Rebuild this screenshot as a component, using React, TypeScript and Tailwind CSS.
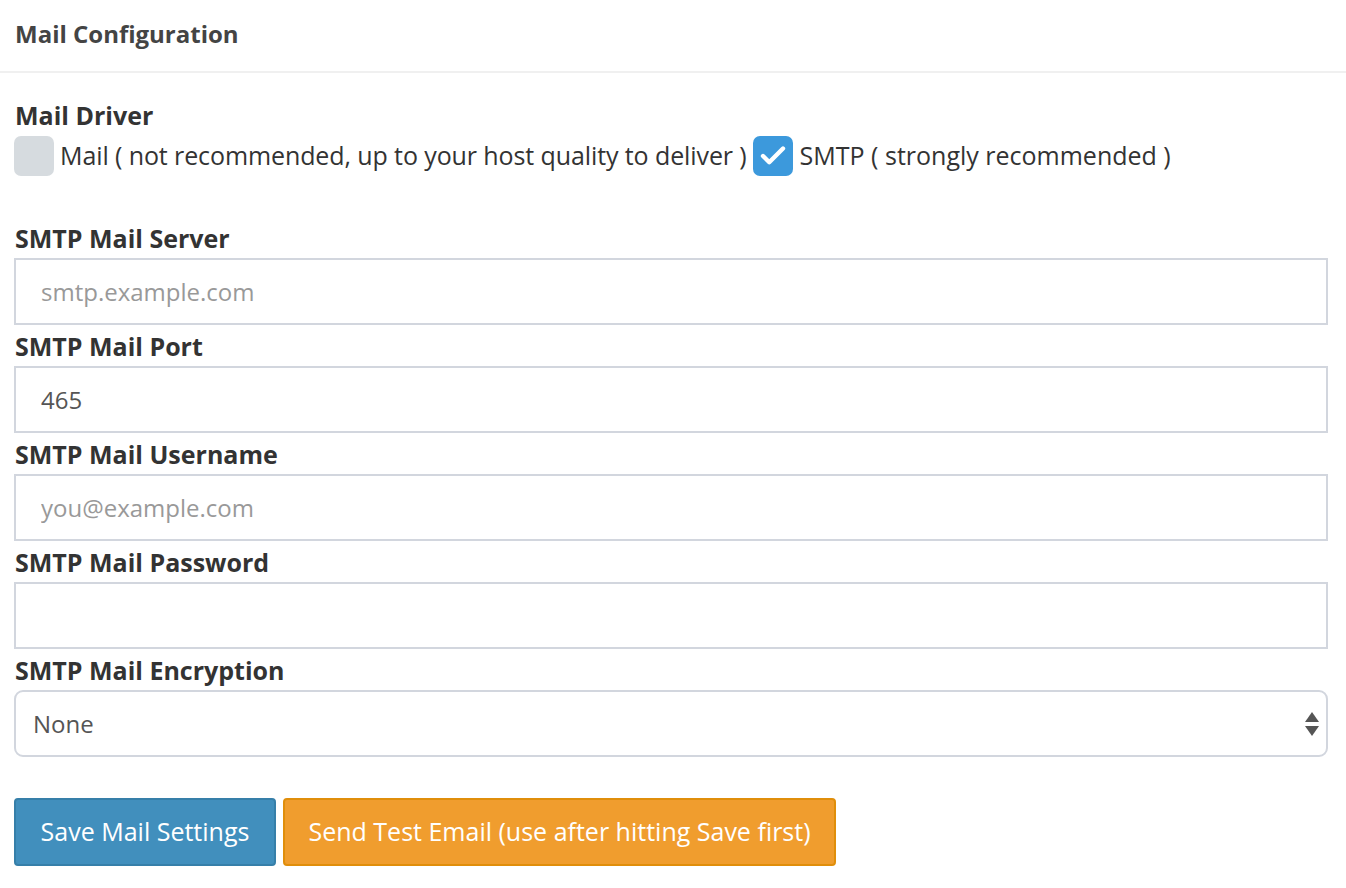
import { Check } from 'lucide-react'

const fields = [
  { label: 'SMTP Mail Server', placeholder: 'smtp.example.com', value: '' },
  { label: 'SMTP Mail Port', placeholder: '', value: '465' },
  { label: 'SMTP Mail Username', placeholder: 'you@example.com', value: '' },
  { label: 'SMTP Mail Password', placeholder: '', value: '', type: 'password' },
]

export default function App() {
  return (
    <div className="min-h-screen bg-white text-[#333] font-['Open_Sans','Lato',sans-serif]">
      <div className="h-[73px] border-b-2 border-[#f0f0f0] px-[15px] flex items-center">
        <h3 className="text-[24px] font-bold text-[#444] leading-none pb-[3px]">Mail Configuration</h3>
      </div>

      <div className="pl-[14px] pr-[18px] pt-[27px]">
        {/* Mail driver */}
        <label className="block text-[25px] font-bold leading-[30px] pl-[1px]">Mail Driver</label>
        <div className="flex items-center h-[44px] text-[25px] mt-[4px]">
          <span className="w-[40px] h-[40px] rounded-[7px] bg-[#d6dbdf] shrink-0" />
          <span className="ml-[6px] tracking-[-0.1px]">Mail ( not recommended, up to your host quality to deliver )</span>
          <span className="ml-[6px] w-[40px] h-[40px] rounded-[7px] bg-[#3c99dc] shrink-0 flex items-center justify-center">
            <Check className="w-[30px] h-[30px] text-white" strokeWidth={3.5} />
          </span>
          <span className="ml-[7px]">SMTP ( strongly recommended )</span>
        </div>

        <div className="mt-[45px]">
          {fields.map((f) => (
            <div key={f.label} className="h-[108px]">
              <label className="block text-[25px] font-bold leading-[30px] pl-[1px] h-[35px]">{f.label}</label>
              <input
                type={f.type ?? 'text'}
                defaultValue={f.value}
                placeholder={f.placeholder}
                className="w-full h-[67px] border-2 border-[#d2d6de] px-[25px] text-[24px] text-[#555] placeholder:text-[#999] outline-none"
              />
            </div>
          ))}
          <div>
            <label className="block text-[25px] font-bold leading-[30px] pl-[1px] h-[35px]">SMTP Mail Encryption</label>
            <div className="relative">
              <select className="appearance-none w-full h-[67px] border-2 border-[#d2d6de] rounded-[9px] px-[17px] text-[24px] text-[#555] bg-white outline-none">
                <option>None</option>
                <option>SSL</option>
                <option>TLS</option>
              </select>
              <svg className="absolute right-[9px] top-[22px] pointer-events-none" width="14" height="24" viewBox="0 0 14 24">
                <path d="M7 0 L14 10 L0 10 Z" fill="#555" />
                <path d="M0 14 L14 14 L7 24 Z" fill="#555" />
              </svg>
            </div>
          </div>
        </div>

        <div className="flex gap-[7px] mt-[41px]">
          <button className="h-[68px] w-[262px] bg-[#418fbd] border-2 border-[#367fa9] rounded-[4px] text-white text-[25px]">
            Save Mail Settings
          </button>
          <button className="h-[68px] w-[553px] bg-[#f09d2e] border-2 border-[#e08e0b] rounded-[4px] text-white text-[25px]">
            Send Test Email (use after hitting Save first)
          </button>
        </div>
      </div>
    </div>
  )
}
